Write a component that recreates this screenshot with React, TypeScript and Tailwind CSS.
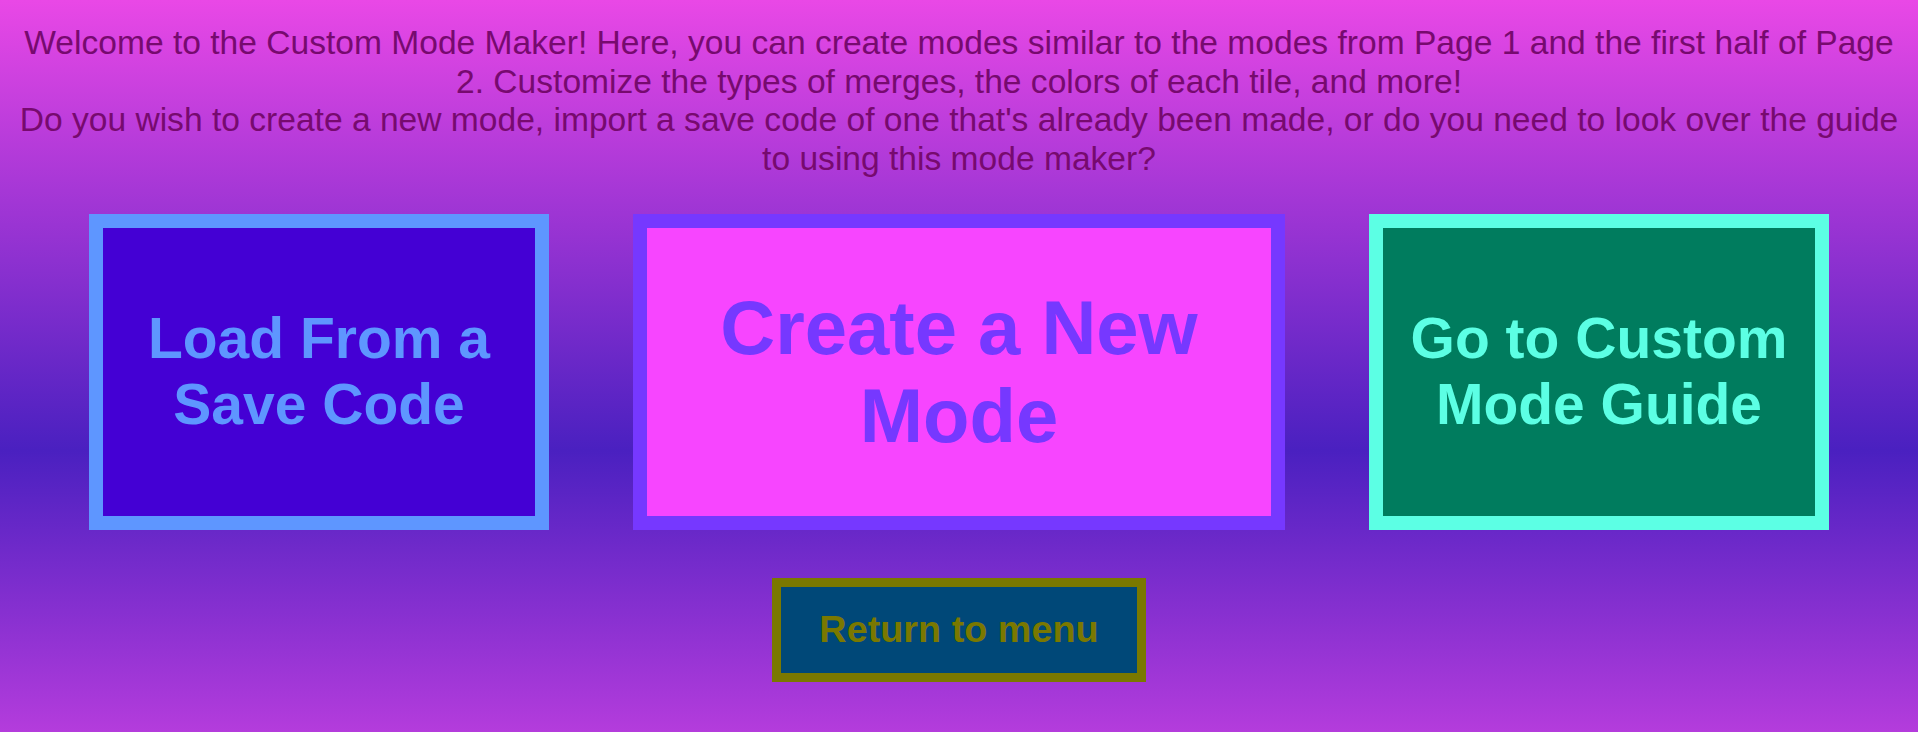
export default function App() {
  return (
    <div className="min-h-[732px] w-full bg-[linear-gradient(to_bottom,#e948e6_0%,#4a20c0_61.5%,#b43cdc_100%)] font-['Liberation_Sans',Arial,sans-serif] pt-[24px] pb-[40px]">
      <p className="px-2 text-center text-[33.6px] leading-[38.64px] text-[#770a6f]">
        Welcome to the Custom Mode Maker! Here, you can create modes similar to the modes from Page 1 and the first half of Page
        <br />
        2. Customize the types of merges, the colors of each tile, and more!
        <br />
        Do you wish to create a new mode, import a save code of one that's already been made, or do you need to look over the guide
        <br />
        to using this mode maker?
      </p>

      <div className="mt-[35px] flex justify-center gap-[84px]">
        <button className="flex h-[316px] w-[460px] items-center justify-center border-[14px] border-[#5e96ff] bg-[#4400d4] px-1 text-center text-[57px] font-bold leading-[1.15] text-[#5e96ff]">
          Load From a Save Code
        </button>
        <button className="flex h-[316px] w-[652px] items-center justify-center border-[14px] border-[#7638ff] bg-[#f745ff] px-1 text-center text-[76px] font-bold leading-[1.15] text-[#7638ff]">
          Create a New Mode
        </button>
        <button className="flex h-[316px] w-[460px] items-center justify-center border-[14px] border-[#5cffe4] bg-[#007c5e] px-1 text-center text-[57px] font-bold leading-[1.15] text-[#5cffe4]">
          Go to Custom Mode Guide
        </button>
      </div>

      <div className="mt-[48px] flex justify-center">
        <button className="flex h-[104px] w-[374px] items-center justify-center border-[9px] border-[#7a7800] bg-[#004878] text-[37.8px] font-bold leading-[1.15] text-[#7a7800]">
          Return to menu
        </button>
      </div>
    </div>
  );
}
